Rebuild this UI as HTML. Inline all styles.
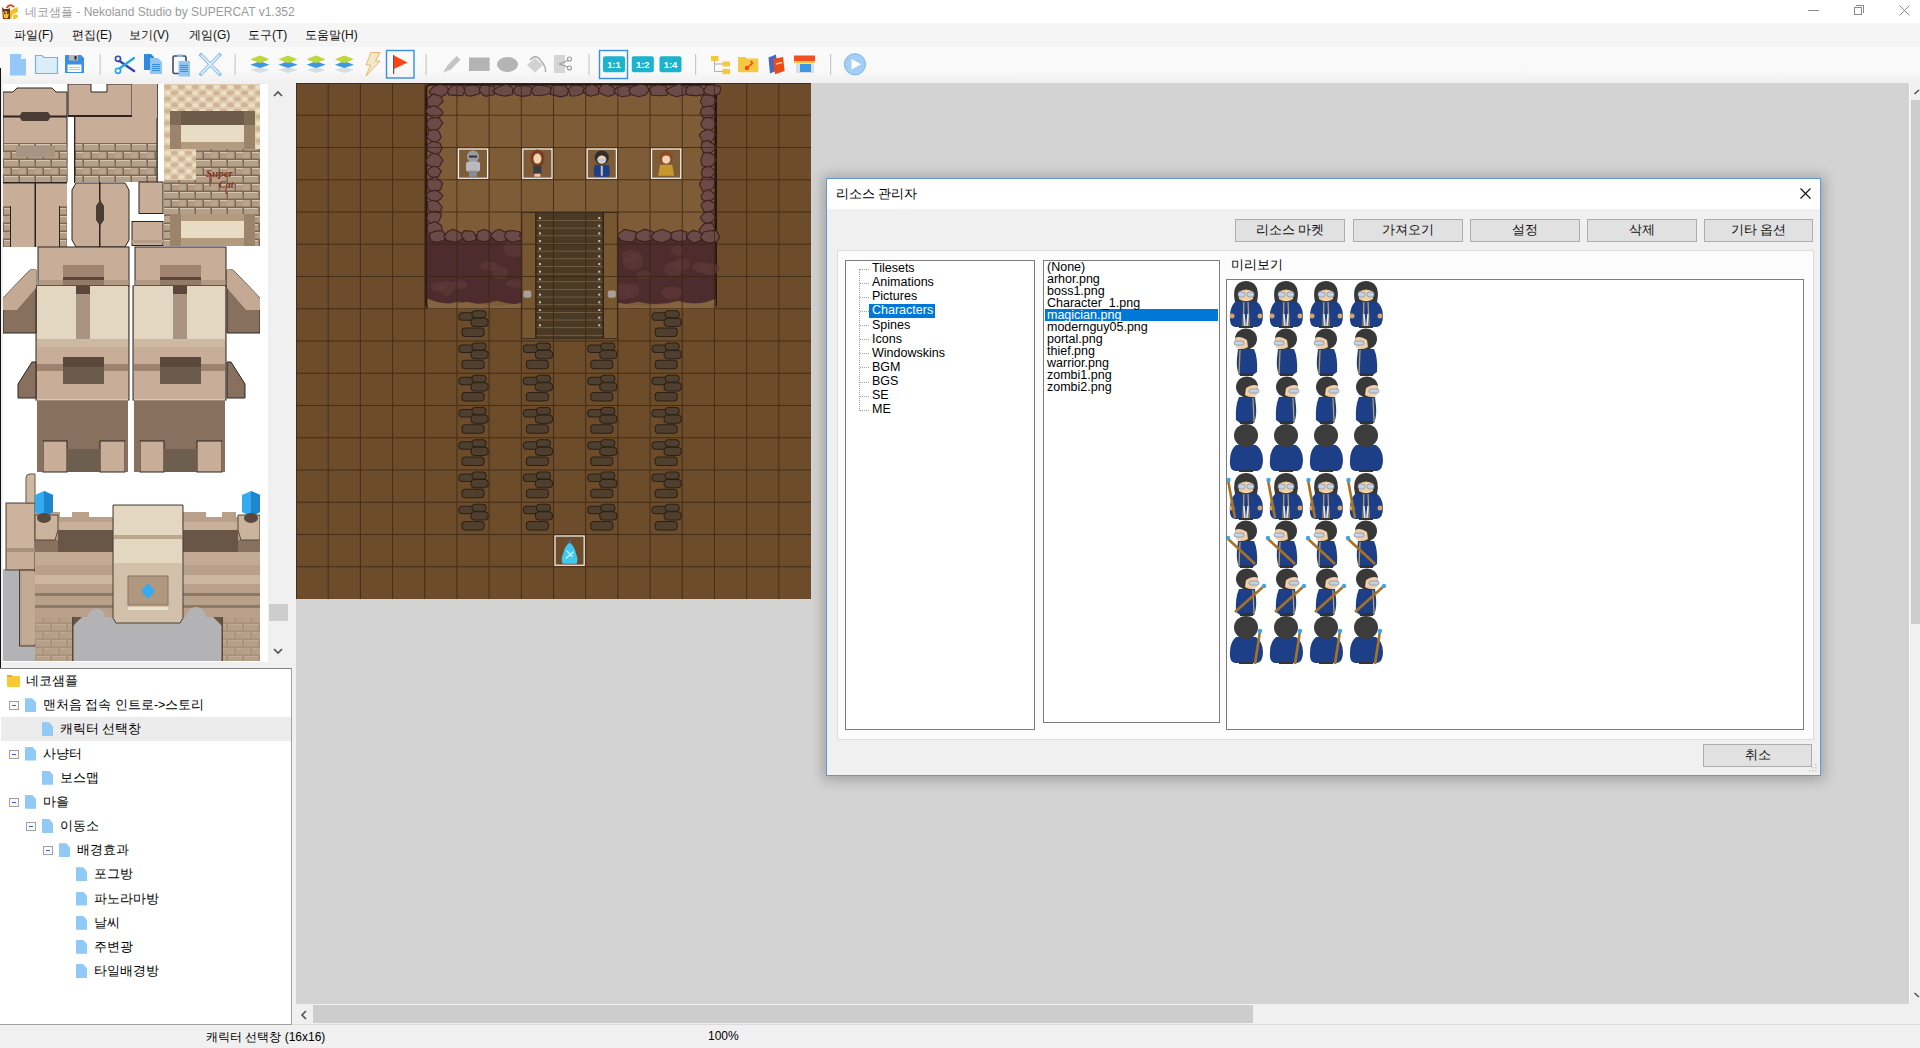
<!DOCTYPE html>
<html><head><meta charset="utf-8">
<style>
*{margin:0;padding:0;box-sizing:border-box}
html,body{width:1920px;height:1048px;overflow:hidden;background:#f0f0f0;font-family:"Liberation Sans",sans-serif;font-size:12px;color:#000}
.a{position:absolute}
#title{left:0;top:0;width:1920px;height:23px;background:#fff}
#menu{left:0;top:23px;width:1920px;height:24px;background:#f5f5f5}
#menu span{position:absolute;top:4px;font-size:12px;color:#111}
#tb{left:0;top:47px;width:1920px;height:36px;background:linear-gradient(#fafafa,#f9f9f9 65%,#f0f0f0)}
.sep{position:absolute;top:8px;width:1px;height:21px;background:#c8c8c8}
#work{left:296px;top:83px;width:1613px;height:921px;background:#d3d3d3}
#tree{left:0;top:668px;width:292px;height:357px;background:#fff;border-top:1px solid #828282;border-right:1px solid #a0a0a0;border-bottom:1px solid #a0a0a0}
.ti{position:absolute;height:24px;font-size:12.5px;line-height:24px;white-space:nowrap}
.doc{position:absolute;width:11px;height:14px;background:#91c9f7;clip-path:polygon(0 0,65% 0,100% 30%,100% 100%,0 100%)}
.mn{position:absolute;width:10px;height:9px;border:1px solid #a0a0a0;background:#fafafa}
.mn:after{content:"";position:absolute;left:2px;top:3px;width:4px;height:1px;background:#3c5fc4}
#status{left:0;top:1025px;width:1920px;height:23px;background:#f0f0f0}
#dlg{left:826px;top:178px;width:995px;height:598px;background:#f0f0f0;border:1px solid #5d9ad6;box-shadow:0 1px 12px 3px rgba(0,0,0,.24)}
.btn{position:absolute;height:23px;background:#e1e1e1;border:1px solid #adadad;font-size:12.5px;text-align:center;line-height:20px;color:#111}
.box{position:absolute;background:#fff;border:1px solid #7c7c7c}
.tr{position:absolute;left:26px;font-size:12.5px;line-height:14px;height:14px;white-space:nowrap;z-index:1}
.li{position:absolute;left:3px;font-size:12.5px;line-height:12px;height:12px;white-space:nowrap;z-index:1}
</style></head><body>

<!-- title bar -->
<div id="title" class="a">
  <svg class="a" style="left:0;top:0" width="20" height="22"><path d="M6.5 8 Q10 3 14 7" stroke="#f04010" stroke-width="1.8" fill="none"/><path d="M2 7 L4 9 L8 9 L10 8 V19 H3 Z" fill="#6a3418"/><path d="M3 12 L6 11 L9 13 L8 18 L4 18Z" fill="#f2c030"/><rect x="4" y="12.5" width="1.5" height="1.5" fill="#2a1408"/><rect x="7" y="12.5" width="1.5" height="1.5" fill="#2a1408"/><path d="M10 11 L13 9 L17.5 7 L18 12 L13 14 L11 19 H10Z" fill="#f0c030"/><path d="M13 15 Q18 13 18 17 Q17 19.5 13 19Z" fill="#f2c838"/><rect x="5" y="18" width="2" height="1.2" fill="#f04010"/></svg>
  <div class="a" style="left:25px;top:4px;font-size:12px;color:#9a9a9a;white-space:nowrap">네코샘플 - Nekoland Studio by SUPERCAT v1.352</div>
  <div class="a" style="left:1808px;top:10px;width:11px;height:1px;background:#8a8a8a"></div>
  <div class="a" style="left:1854px;top:7px;width:8px;height:8px;border:1px solid #8a8a8a"></div>
  <div class="a" style="left:1856px;top:5px;width:8px;height:8px;border-top:1px solid #8a8a8a;border-right:1px solid #8a8a8a"></div>
  <svg class="a" style="left:1899px;top:5px" width="11" height="11"><path d="M0.5 0.5L10.5 10.5M10.5 0.5L0.5 10.5" stroke="#8a8a8a" stroke-width="1"/></svg>
</div>

<!-- menu -->
<div id="menu" class="a">
  <span style="left:14px">파일(F)</span>
  <span style="left:72px">편집(E)</span>
  <span style="left:129px">보기(V)</span>
  <span style="left:189px">게임(G)</span>
  <span style="left:248px">도구(T)</span>
  <span style="left:305px">도움말(H)</span>
</div>

<!-- toolbar -->
<div id="tb" class="a"></div>
<!--TB--><svg class="a" style="left:0;top:47px" width="900" height="37"><rect x="99.5" y="7" width="1.2" height="21" fill="#c9c9c9"/><rect x="234.5" y="7" width="1.2" height="21" fill="#c9c9c9"/><rect x="425.5" y="7" width="1.2" height="21" fill="#c9c9c9"/><rect x="588.5" y="7" width="1.2" height="21" fill="#c9c9c9"/><rect x="695.0" y="7" width="1.2" height="21" fill="#c9c9c9"/><rect x="830.0" y="7" width="1.2" height="21" fill="#c9c9c9"/><path d="M10 7 H21 L26 12 V28.5 H10Z" fill="#94c8f6"/><path d="M21 7 L26 12 H21Z" fill="#eef6fd"/><path d="M35.5 8.5 H42 L44 10.5 H57.5 V26.5 H35.5Z" fill="#dcedfa" stroke="#70b4ec" stroke-width="1.2"/><path d="M65 8 H81 L84 11 V26 H65Z" fill="#3d8fe0"/><rect x="67.5" y="17.5" width="14" height="7.5" fill="#fafafa"/><rect x="69" y="20" width="11" height="1" fill="#c8c8c8"/><rect x="69" y="22" width="11" height="1" fill="#c8c8c8"/><rect x="69" y="8" width="9" height="5.5" fill="#b8b8b8"/><rect x="74.5" y="9" width="2" height="3.5" fill="#222"/><path d="M119.5 14 L134 24" stroke="#3a4aa8" stroke-width="2.6" stroke-linecap="round"/><path d="M119.5 21.5 L134 11" stroke="#20a8e8" stroke-width="2.2" stroke-linecap="round"/><circle cx="118" cy="11.799999999999997" r="2.6" fill="none" stroke="#3a4aa8" stroke-width="1.6"/><circle cx="118" cy="23.799999999999997" r="2.6" fill="none" stroke="#20a8e8" stroke-width="1.6"/><path d="M144 7 H151 L154 10 V23 H144Z" fill="#2e8ae0"/><path d="M150 11 H158 L162 15 V27 H150Z" fill="#92c6f5"/><rect x="152" y="17" width="8" height="1" fill="#3a8ee0"/><rect x="152" y="19" width="8" height="1" fill="#3a8ee0"/><rect x="152" y="21" width="8" height="1" fill="#3a8ee0"/><rect x="152" y="23" width="8" height="1" fill="#3a8ee0"/><rect x="173" y="9" width="13" height="17.5" rx="1.5" fill="#fafafa" stroke="#454a55" stroke-width="1.6"/><rect x="177" y="7.5" width="6" height="2.5" fill="#8ab4d8"/><rect x="178.5" y="14" width="11.5" height="15.5" fill="#92c6f5"/><rect x="180" y="18" width="8" height="1" fill="#3a8ee0"/><rect x="180" y="20" width="8" height="1" fill="#3a8ee0"/><rect x="180" y="22" width="8" height="1" fill="#3a8ee0"/><rect x="180" y="24" width="8" height="1" fill="#3a8ee0"/><path d="M201 8 L219.5 27 M219.5 8 L201 27" stroke="#8cc0ea" stroke-width="3.6" stroke-linecap="square"/><path d="M201 8 L219.5 27 M219.5 8 L201 27" stroke="#e4f2fc" stroke-width="1.6"/><path d="M250.3 23 L259.90000000000003 20 L269.5 23 L259.90000000000003 26Z" fill="#d5dde5"/><path d="M250.3 17.700000000000003 L259.90000000000003 14.299999999999997 L269.5 17.700000000000003 L259.90000000000003 21Z" fill="#3a98e4"/><path d="M250.3 12.299999999999997 L259.90000000000003 8.5 L269.5 12.299999999999997 L259.90000000000003 16.299999999999997Z" fill="#bcd83a"/><path d="M278.4 23 L288.0 20 L297.59999999999997 23 L288.0 26Z" fill="#d5dde5"/><path d="M278.4 17.700000000000003 L288.0 14.299999999999997 L297.59999999999997 17.700000000000003 L288.0 21Z" fill="#3a98e4"/><path d="M278.4 12.299999999999997 L288.0 8.5 L297.59999999999997 12.299999999999997 L288.0 16.299999999999997Z" fill="#bcd83a"/><path d="M306.5 23 L316.1 20 L325.7 23 L316.1 26Z" fill="#d5dde5"/><path d="M306.5 17.700000000000003 L316.1 14.299999999999997 L325.7 17.700000000000003 L316.1 21Z" fill="#3a98e4"/><path d="M306.5 12.299999999999997 L316.1 8.5 L325.7 12.299999999999997 L316.1 16.299999999999997Z" fill="#bcd83a"/><path d="M334.8 23 L344.40000000000003 20 L354.0 23 L344.40000000000003 26Z" fill="#d5dde5"/><path d="M334.8 17.700000000000003 L344.40000000000003 14.299999999999997 L354.0 17.700000000000003 L344.40000000000003 21Z" fill="#3a98e4"/><path d="M334.8 12.299999999999997 L344.40000000000003 8.5 L354.0 12.299999999999997 L344.40000000000003 16.299999999999997Z" fill="#bcd83a"/><path d="M371 5.5 H380 L375.5 14 H380 L366 29 L370.5 18 H366Z" fill="#f3e6c9" stroke="#e8b060" stroke-width="0.9"/><rect x="386.5" y="3.5" width="27.5" height="27.5" fill="none" stroke="#3a8ee6" stroke-width="1.4"/><rect x="393" y="8" width="1.2" height="19" fill="#505868"/><path d="M394 8.5 L407.5 15.5 L394 22Z" fill="#ff4412"/><path d="M443 25.5 L447 19 L456.5 9 L460.5 12.5 L451 22.5Z" fill="#c4c4c4"/><rect x="469" y="10.5" width="20.6" height="13.5" fill="#b4b4b4"/><ellipse cx="507.5" cy="17.5" rx="10.5" ry="7.5" fill="#b4b4b4"/><path d="M527 18 L535 11 L543 18 L535 25.5Z" fill="#d2d2d2"/><path d="M530 13 Q536 6 541 14 Q546 19 545.5 25" fill="none" stroke="#a8a8a8" stroke-width="1.3"/><rect x="554" y="8" width="11" height="18" fill="#d6d6d6"/><circle cx="569.5" cy="12" r="2" fill="none" stroke="#999" stroke-width="1.1"/><circle cx="569.5" cy="21" r="2" fill="none" stroke="#999" stroke-width="1.1"/><path d="M559 17 L568 13.5 M559 17 L568 20" stroke="#999" stroke-width="1.1"/><rect x="599.5" y="3.5" width="28" height="28" fill="none" stroke="#3a8ee6" stroke-width="1.4"/><rect x="603" y="9.200000000000003" width="22" height="16" rx="2" fill="#1cb3cc"/><text x="614" y="21" text-anchor="middle" font-family="Liberation Sans" font-weight="bold" font-size="9.5" fill="#fff">1:1</text><rect x="631.8" y="9.200000000000003" width="22" height="16" rx="2" fill="#1cb3cc"/><text x="642.8" y="21" text-anchor="middle" font-family="Liberation Sans" font-weight="bold" font-size="9.5" fill="#fff">1:2</text><rect x="659.5" y="9.200000000000003" width="22" height="16" rx="2" fill="#1cb3cc"/><text x="670.5" y="21" text-anchor="middle" font-family="Liberation Sans" font-weight="bold" font-size="9.5" fill="#fff">1:4</text><path d="M714.5 13 V24.5 H723 M714.5 17 H723" stroke="#a8b0b8" stroke-width="1" fill="none"/><rect x="711" y="9" width="7.5" height="5" fill="#f5c842"/><rect x="722.5" y="14.5" width="7.5" height="5" fill="#f5c842"/><rect x="722.5" y="21.799999999999997" width="7.5" height="5.4" fill="#f5c842"/><path d="M738 10 H745 L747 11.5 H758.3 V25.200000000000003 H738Z" fill="#f5c842"/><path d="M750.5 14 L752.5 16 L749 19.5" stroke="#f04a10" stroke-width="1.6" fill="none"/><circle cx="747" cy="21" r="2.2" fill="#f04a10"/><path d="M768.5 10.5 L776 7.5 L778 23 L770 26.5Z" fill="#4868c0"/><path d="M773 12 L783 10 L784.6 24 L775 27.200000000000003Z" fill="#f04a14"/><path d="M776 17 L782 15.5" stroke="#f8d0a0" stroke-width="1.4"/><rect x="796" y="15" width="18" height="11" fill="#d8dee4"/><rect x="800" y="17" width="11" height="8" fill="#3a98e4"/><rect x="794" y="8.5" width="21" height="6.5" fill="#f25020"/><rect x="794" y="14" width="21" height="2" fill="#f5c842"/><circle cx="855" cy="17.299999999999997" r="10.6" fill="#a3cff6" stroke="#7fb5e6" stroke-width="1"/><path d="M851.5 12 L861 17.299999999999997 L851.5 22.5Z" fill="#fff"/></svg><!--/TB-->

<!-- left black line -->
<div class="a" style="left:0;top:68px;width:1px;height:655px;background:#111"></div>

<!-- tileset panel -->
<div class="a" id="tsp" style="left:1px;top:83px;width:294px;height:585px;background:#f0f0f0">
  <div class="a" style="left:2px;top:1px;width:265px;height:578px;background:#fff"></div>
</div>
<div class="a" style="left:269px;top:604px;width:19px;height:17px;background:#cdcdcd"></div>
<svg class="a" style="left:273px;top:90px" width="10" height="7"><path d="M1 6 L5 2 L9 6" stroke="#505050" stroke-width="1.6" fill="none"/></svg>
<svg class="a" style="left:273px;top:648px" width="10" height="7"><path d="M1 1 L5 5 L9 1" stroke="#505050" stroke-width="1.6" fill="none"/></svg>
<!--TS--><svg class="a" style="left:3px;top:84px" width="257" height="577" viewBox="3 84 257 577"><defs>
<pattern id="brk" width="16" height="16" patternUnits="userSpaceOnUse" x="3" y="143">
<rect width="16" height="16" fill="#7f6856"/>
<rect x="1" y="1" width="14.5" height="6.5" fill="#b5a08a"/>
<rect x="-7" y="9" width="14.5" height="6.5" fill="#b8a38d"/><rect x="9" y="9" width="14.5" height="6.5" fill="#b29c86"/>
<rect x="1" y="1" width="14" height="1" fill="#d6c6b2"/><rect x="9" y="9" width="14" height="1" fill="#d6c6b2"/>
</pattern>
<pattern id="hex" width="14" height="12" patternUnits="userSpaceOnUse" x="164" y="84">
<rect width="14" height="12" fill="#e0cdb0"/>
<ellipse cx="3.5" cy="3" rx="3.5" ry="2.2" fill="#d0b496"/><ellipse cx="10.5" cy="9" rx="3.5" ry="2.2" fill="#d0b496"/>
<ellipse cx="10.5" cy="3" rx="3" ry="2" fill="#ece0c6"/><ellipse cx="3.5" cy="9" rx="3" ry="2" fill="#ece0c6"/>
</pattern>
</defs><rect x="3" y="84" width="257" height="577" fill="#ffffff"/><path d="M3 92 H13 L17 88 H52 L56 92 H67 V182 H3Z" fill="#c8ae98" stroke="#2c2420" stroke-width="1"/><rect x="3" y="115.5" width="64" height="2" fill="#2c2420"/><path d="M19 116.5 L22 112 H48 L51 116.5 L48 121 H22Z" fill="#4a3c34"/><rect x="3" y="143" width="64" height="39" fill="url(#brk)"/><rect x="16" y="146" width="39" height="11" fill="#a89482"/><path d="M68 84 H91 V92 H107 V84 H132 V116 H68Z" fill="#c8ae98" stroke="#2c2420" stroke-width="1"/><rect x="68" y="115" width="64" height="2" fill="#2c2420"/><rect x="75" y="117" width="82" height="65" fill="#c8ae98"/><rect x="75" y="143" width="82" height="39" fill="url(#brk)"/><rect x="74" y="117" width="1.3" height="66" fill="#2c2420"/><rect x="156.5" y="84" width="1.3" height="99" fill="#2c2420"/><rect x="132" y="84" width="25" height="34" fill="#c8ae98"/><rect x="3" y="182" width="64" height="65" fill="#c8ae98"/><rect x="3" y="182" width="64" height="1.5" fill="#2c2420"/><rect x="34.5" y="183" width="1.5" height="64" fill="#2c2420"/><rect x="3" y="206" width="7" height="41" fill="url(#brk)"/><rect x="59" y="206" width="8" height="41" fill="url(#brk)"/><rect x="10" y="206" width="1" height="41" fill="#2c2420"/><rect x="59" y="206" width="1" height="41" fill="#2c2420"/><path d="M72 190 L76 183 H125 L129 190 V240 L125 247 H76 L72 240Z" fill="#c8ae98" stroke="#2c2420" stroke-width="1"/><rect x="99" y="182" width="1.5" height="65" fill="#2c2420"/><path d="M100 200 L104 206 V220 L100 226 L96 220 V206Z" fill="#4a3c34"/><rect x="139" y="182" width="24" height="31.5" fill="#c8ae98" stroke="#2c2420" stroke-width="1"/><rect x="132" y="221.5" width="31" height="24" fill="#c8ae98" stroke="#2c2420" stroke-width="1"/><rect x="132" y="240" width="31" height="3" fill="#b49c86"/><rect x="164" y="84" width="96" height="65" fill="url(#hex)"/><rect x="170" y="111" width="85" height="38" fill="#b39b80"/><rect x="170" y="111" width="85" height="14" fill="#6e5a48"/><rect x="181" y="125" width="63" height="17" fill="#e8dcc4"/><rect x="170" y="111" width="11" height="38" fill="#8a745e" opacity=".6"/><rect x="244" y="111" width="11" height="38" fill="#8a745e" opacity=".6"/><rect x="164" y="149" width="96" height="66" fill="url(#brk)"/><rect x="164" y="149" width="32" height="31" fill="url(#hex)"/><text x="206" y="177" font-family="Liberation Serif" font-weight="bold" font-style="italic" font-size="11" fill="#7a3216">Super</text><text x="219" y="188" font-family="Liberation Serif" font-weight="bold" font-style="italic" font-size="10" fill="#7a3216">Cat</text><path d="M210 177 V186 M226 188 V194" stroke="#7a3216" stroke-width="1"/><rect x="164" y="214" width="96" height="32" fill="url(#brk)"/><rect x="170" y="214" width="85" height="32" fill="#b39b80"/><rect x="181" y="221" width="63" height="17" fill="#e8dcc4"/><rect x="170" y="214" width="11" height="32" fill="#8a745e" opacity=".6"/><rect x="244" y="214" width="11" height="32" fill="#8a745e" opacity=".6"/><rect x="38" y="247" width="91" height="39" fill="#c8ae98" stroke="#2c2420" stroke-width="1"/><rect x="63" y="265" width="41" height="13" fill="#a08470"/><rect x="63" y="277" width="41" height="13" fill="#5a463a"/><rect x="38" y="280" width="91" height="6" fill="#a8907a" opacity=".7"/><rect x="36" y="286" width="93" height="114" fill="#c8ae98" stroke="#2c2420" stroke-width="1"/><rect x="37" y="286" width="91" height="54" fill="#e3d7c2"/><rect x="76" y="290" width="14" height="55" fill="#a89480"/><rect x="76" y="286" width="14" height="8" fill="#5a463a"/><rect x="37" y="339" width="91" height="8" fill="#cdb8a2"/><rect x="63" y="357" width="41" height="10" fill="#5a483c"/><rect x="63" y="367" width="41" height="17" fill="#6a5a4c"/><rect x="37" y="364" width="26" height="7" fill="#a08270"/><rect x="104" y="364" width="24" height="7" fill="#a08270"/><rect x="37" y="400" width="91" height="49" fill="#87705e"/><rect x="37" y="399" width="91" height="1.3" fill="#d8c8b4"/><rect x="43" y="441" width="24" height="31" fill="#c8ae98" stroke="#2c2420" stroke-width="1"/><rect x="100" y="441" width="25" height="31" fill="#c8ae98" stroke="#2c2420" stroke-width="1"/><rect x="67" y="449" width="33" height="23" fill="#6e5e50"/><rect x="37" y="441" width="6" height="31" fill="#87705e"/><rect x="125" y="441" width="3" height="31" fill="#87705e"/><rect x="135" y="247" width="91" height="39" fill="#c8ae98" stroke="#2c2420" stroke-width="1"/><rect x="160" y="265" width="41" height="13" fill="#a08470"/><rect x="160" y="277" width="41" height="13" fill="#5a463a"/><rect x="135" y="280" width="91" height="6" fill="#a8907a" opacity=".7"/><rect x="133" y="286" width="93" height="114" fill="#c8ae98" stroke="#2c2420" stroke-width="1"/><rect x="134" y="286" width="91" height="54" fill="#e3d7c2"/><rect x="173" y="290" width="14" height="55" fill="#a89480"/><rect x="173" y="286" width="14" height="8" fill="#5a463a"/><rect x="134" y="339" width="91" height="8" fill="#cdb8a2"/><rect x="160" y="357" width="41" height="10" fill="#5a483c"/><rect x="160" y="367" width="41" height="17" fill="#6a5a4c"/><rect x="134" y="364" width="26" height="7" fill="#a08270"/><rect x="201" y="364" width="24" height="7" fill="#a08270"/><rect x="134" y="400" width="91" height="49" fill="#87705e"/><rect x="134" y="399" width="91" height="1.3" fill="#d8c8b4"/><rect x="140" y="441" width="24" height="31" fill="#c8ae98" stroke="#2c2420" stroke-width="1"/><rect x="197" y="441" width="25" height="31" fill="#c8ae98" stroke="#2c2420" stroke-width="1"/><rect x="164" y="449" width="33" height="23" fill="#6e5e50"/><rect x="134" y="441" width="6" height="31" fill="#87705e"/><rect x="222" y="441" width="3" height="31" fill="#87705e"/><path d="M3 298 L30 270 H36 V333 H3Z" fill="#87705e" stroke="#2c2420" stroke-width="1"/><path d="M3 298 L30 270 H36 V288 L17 310 H3Z" fill="#c4aa94"/><path d="M260 298 L233 270 H227 V333 H260Z" fill="#87705e" stroke="#2c2420" stroke-width="1"/><path d="M260 298 L233 270 H227 V288 L246 310 H260Z" fill="#c4aa94"/><path d="M18 384 L32 362 H36 V398 H18Z" fill="#87705e" stroke="#2c2420" stroke-width="1"/><path d="M245 384 L231 362 H227 V398 H245Z" fill="#87705e" stroke="#2c2420" stroke-width="1"/><rect x="3" y="569" width="32" height="92" fill="#b3b3b5"/><rect x="6" y="503" width="29" height="67" fill="#c8ae98" stroke="#4a3c34" stroke-width="1"/><rect x="7" y="504" width="27" height="46" fill="#cbb39d"/><rect x="7" y="548" width="28" height="4" fill="#a8907a"/><rect x="19.5" y="570" width="15.5" height="76" fill="#b8a08a" stroke="#4a3c34" stroke-width="1"/><rect x="22" y="572" width="13" height="72" fill="#c2aa94"/><path d="M26 478 Q26 474 30 474 H35 V503 H26Z" fill="#cdb9a4" stroke="#6a5646" stroke-width="1"/><path d="M35 512 H60 V517 H72 V512 H89 V517 H113 V661 H35Z" fill="#b8a08a"/><rect x="35" y="522" width="78" height="9" fill="#c8b09a"/><rect x="58" y="530" width="55" height="22" fill="#6a5646"/><rect x="35" y="540" width="23" height="12" fill="#86705e"/><rect x="35" y="552" width="78" height="13" fill="#c2aa94"/><rect x="35" y="575" width="78" height="9" fill="#cdb6a0"/><rect x="35" y="593" width="78" height="3" fill="#8e7866"/><rect x="35" y="605" width="78" height="3" fill="#8e7866"/><rect x="35" y="618" width="38" height="43" fill="url(#brk)" opacity=".3"/><path d="M183 512 H206 V517 H222 V512 H236 V517 H260 V661 H183Z" fill="#b8a08a"/><rect x="183" y="522" width="77" height="9" fill="#c8b09a"/><rect x="183" y="530" width="55" height="22" fill="#6a5646"/><rect x="238" y="540" width="22" height="12" fill="#86705e"/><rect x="183" y="552" width="77" height="13" fill="#c2aa94"/><rect x="183" y="575" width="77" height="9" fill="#cdb6a0"/><rect x="183" y="593" width="77" height="3" fill="#8e7866"/><rect x="183" y="605" width="77" height="3" fill="#8e7866"/><rect x="222" y="618" width="38" height="43" fill="url(#brk)" opacity=".3"/><path d="M73 661 V617 H88 A8.5 8.5 0 0 1 105 617 H186 A10 10 0 0 1 206 617 H222 V661Z" fill="#b3b3b5"/><path d="M73 617 H82 L73 626Z" fill="#6a5646"/><path d="M222 617 H213 L222 626Z" fill="#6a5646"/><rect x="72" y="617" width="1.5" height="44" fill="#5a483c"/><rect x="221.5" y="617" width="1.5" height="44" fill="#5a483c"/><path d="M113 505 H183 V618 L180 623 H116 L113 618Z" fill="#d2c0aa" stroke="#4a3c34" stroke-width="1"/><rect x="114" y="506" width="68" height="57" fill="#e3d7c2"/><rect x="114" y="535" width="68" height="4" fill="#bca68e"/><rect x="128" y="576" width="40" height="29" fill="#b09880" stroke="#8a745e" stroke-width="1"/><path d="M148 583 L155 591 L148 599 L141 591Z" fill="#36aaf0"/><rect x="128" y="607" width="40" height="3" fill="#ece2d0"/><path d="M35 515 H58 V530 L55 540 H35Z" fill="#cbb49e" stroke="#5a483c" stroke-width="1"/><path d="M260 515 H238 V530 L241 540 H260Z" fill="#cbb49e" stroke="#5a483c" stroke-width="1"/><path d="M35 495 L44 491 L53 495 V512 L44 517 L35 512Z" fill="#36aaf0"/><path d="M44 491 L53 495 V512 L44 517Z" fill="#1e86d0"/><ellipse cx="44" cy="518" rx="7" ry="5" fill="#5a483c"/><path d="M242 495 L251 491 L260 495 V512 L251 517 L242 512Z" fill="#36aaf0"/><path d="M251 491 L260 495 V512 L251 517Z" fill="#1e86d0"/><ellipse cx="251" cy="518" rx="7" ry="5" fill="#5a483c"/></svg><!--/TS-->

<!-- work area -->
<div id="work" class="a"></div>
<!--MAP--><svg class="a" style="left:296px;top:83px" width="515" height="516" viewBox="0 0 512 512" preserveAspectRatio="none"><rect width="512" height="512" fill="#6c4c2a"/><rect x="129.5" y="1.5" width="288" height="222" rx="4" fill="#7d5c37" stroke="#24140f" stroke-width="2"/><path d="M130 150 H417 V214 Q400 222 380 216 Q360 222 340 217 Q320 222 300 217 L240 217 Q220 222 200 216 Q180 222 160 217 Q145 222 130 214Z" fill="#4e2b2d"/><ellipse cx="203.2" cy="188.1" rx="7.8" ry="6.4" fill="#5e3838" opacity=".75"/><ellipse cx="141.6" cy="202.2" rx="7.3" ry="4.9" fill="#5e3838" opacity=".75"/><ellipse cx="410.8" cy="184.6" rx="10.2" ry="5.9" fill="#5e3838" opacity=".75"/><ellipse cx="345.8" cy="190.4" rx="7.5" ry="4.1" fill="#5e3838" opacity=".75"/><ellipse cx="375.2" cy="184.7" rx="9.6" ry="7.5" fill="#5e3838" opacity=".75"/><ellipse cx="333.7" cy="206.2" rx="8.0" ry="7.2" fill="#5e3838" opacity=".75"/><ellipse cx="378.8" cy="166.7" rx="6.7" ry="4.9" fill="#5e3838" opacity=".75"/><ellipse cx="402.5" cy="182.9" rx="9.1" ry="5.2" fill="#5e3838" opacity=".75"/><ellipse cx="324.9" cy="206.6" rx="10.3" ry="8.0" fill="#5e3838" opacity=".75"/><ellipse cx="373.8" cy="208.3" rx="10.5" ry="6.3" fill="#5e3838" opacity=".75"/><ellipse cx="333.6" cy="172.1" rx="10.2" ry="6.3" fill="#5e3838" opacity=".75"/><ellipse cx="216.1" cy="165.0" rx="10.3" ry="8.0" fill="#5e3838" opacity=".75"/><ellipse cx="162.3" cy="200.4" rx="8.1" ry="4.6" fill="#5e3838" opacity=".75"/><ellipse cx="218.5" cy="198.9" rx="10.4" ry="4.2" fill="#5e3838" opacity=".75"/><ellipse cx="334.9" cy="177.9" rx="10.4" ry="7.9" fill="#5e3838" opacity=".75"/><ellipse cx="192.1" cy="181.6" rx="9.1" ry="4.6" fill="#5e3838" opacity=".75"/><ellipse cx="149.6" cy="203.7" rx="7.6" ry="7.8" fill="#5e3838" opacity=".75"/><ellipse cx="383.7" cy="180.1" rx="8.3" ry="6.1" fill="#5e3838" opacity=".75"/><polygon points="152.6,7.5 148.5,11.6 143.3,14.1 134.7,11.6 132.3,8.6 136.2,3.9 142.8,1.4 148.6,2.5" fill="#6b4a47" stroke="#3b2220" stroke-width="1.1"/><polygon points="168.0,7.9 165.7,12.3 161.0,12.5 151.9,11.8 150.8,8.1 153.8,3.5 159.1,2.0 165.7,3.0" fill="#6b4a47" stroke="#3b2220" stroke-width="1.1"/><polygon points="183.9,7.2 181.9,10.8 174.1,13.0 169.2,12.5 167.3,8.1 168.4,3.3 173.6,2.1 180.9,2.7" fill="#6b4a47" stroke="#3b2220" stroke-width="1.1"/><polygon points="197.9,8.2 197.0,11.5 188.7,13.2 185.2,11.5 182.1,7.4 184.1,2.4 189.0,2.1 197.3,3.8" fill="#6b4a47" stroke="#3b2220" stroke-width="1.1"/><polygon points="215.7,7.2 215.1,11.6 207.7,13.0 200.1,11.7 195.5,7.7 200.0,4.5 208.8,1.1 215.0,4.3" fill="#6b4a47" stroke="#3b2220" stroke-width="1.1"/><polygon points="234.6,8.4 232.4,12.5 224.4,13.3 218.6,11.7 215.9,8.1 218.3,3.5 226.2,2.5 234.1,3.9" fill="#6b4a47" stroke="#3b2220" stroke-width="1.1"/><polygon points="255.2,8.5 249.8,11.1 242.8,12.7 236.6,12.2 233.5,7.4 237.5,2.6 243.1,2.1 252.0,4.0" fill="#6b4a47" stroke="#3b2220" stroke-width="1.1"/><polygon points="270.9,7.2 269.4,12.1 263.2,13.8 252.9,11.2 253.4,6.9 254.4,2.7 260.1,2.2 268.2,3.0" fill="#6b4a47" stroke="#3b2220" stroke-width="1.1"/><polygon points="287.9,7.4 284.8,10.3 279.6,12.6 272.7,12.9 270.8,6.8 272.6,3.6 277.8,1.9 285.1,3.5" fill="#6b4a47" stroke="#3b2220" stroke-width="1.1"/><polygon points="301.8,6.8 300.8,11.0 293.1,13.1 289.3,11.8 285.0,7.8 288.6,3.1 294.8,1.5 299.4,3.4" fill="#6b4a47" stroke="#3b2220" stroke-width="1.1"/><polygon points="318.1,8.0 315.1,11.9 310.3,13.4 303.4,10.8 300.5,7.7 303.3,2.2 308.8,1.0 315.9,4.1" fill="#6b4a47" stroke="#3b2220" stroke-width="1.1"/><polygon points="334.8,6.5 331.8,12.4 324.1,13.6 318.2,11.3 316.2,8.4 318.6,4.6 326.1,2.5 329.8,3.3" fill="#6b4a47" stroke="#3b2220" stroke-width="1.1"/><polygon points="351.0,6.9 347.8,11.6 340.8,13.6 332.9,11.5 331.0,7.3 333.1,3.9 342.3,1.3 348.8,2.4" fill="#6b4a47" stroke="#3b2220" stroke-width="1.1"/><polygon points="370.5,6.5 368.6,12.1 361.7,12.7 353.8,12.2 350.6,6.9 353.1,3.7 360.1,1.8 366.8,2.8" fill="#6b4a47" stroke="#3b2220" stroke-width="1.1"/><polygon points="390.8,7.3 388.4,11.2 378.3,13.6 371.9,11.6 367.6,7.1 372.0,4.4 380.6,1.0 386.9,3.5" fill="#6b4a47" stroke="#3b2220" stroke-width="1.1"/><polygon points="406.5,6.8 405.4,11.2 398.2,12.8 389.1,11.8 387.2,8.0 389.6,3.1 397.8,2.1 402.7,3.6" fill="#6b4a47" stroke="#3b2220" stroke-width="1.1"/><polygon points="422.2,7.3 420.4,11.2 413.2,12.7 406.7,10.7 405.2,7.3 408.1,2.4 414.3,1.7 421.7,3.4" fill="#6b4a47" stroke="#3b2220" stroke-width="1.1"/><polygon points="146.2,18.5 142.6,22.0 138.4,24.7 130.9,22.7 130.5,16.9 131.9,14.1 136.5,10.9 144.4,13.4" fill="#6b4a47" stroke="#3b2220" stroke-width="1.1"/><polygon points="418.0,17.1 415.2,22.0 408.9,23.5 404.6,23.6 402.1,18.3 404.0,12.8 408.1,11.7 414.8,13.1" fill="#6b4a47" stroke="#3b2220" stroke-width="1.1"/><polygon points="146.2,29.3 143.3,33.2 138.6,34.7 132.4,32.6 129.0,28.0 130.4,25.0 137.1,22.4 143.1,25.4" fill="#6b4a47" stroke="#3b2220" stroke-width="1.1"/><polygon points="417.5,29.5 413.9,33.5 408.6,35.9 403.6,33.1 401.9,30.0 403.4,24.7 410.1,22.8 414.4,24.0" fill="#6b4a47" stroke="#3b2220" stroke-width="1.1"/><polygon points="146.0,39.7 142.0,45.4 136.3,46.9 132.1,46.4 129.7,40.4 132.4,35.5 137.0,34.3 142.2,34.6" fill="#6b4a47" stroke="#3b2220" stroke-width="1.1"/><polygon points="417.3,41.4 414.2,45.9 410.2,47.5 404.1,44.3 402.4,40.7 404.9,35.4 409.0,33.9 415.5,35.4" fill="#6b4a47" stroke="#3b2220" stroke-width="1.1"/><polygon points="144.3,53.5 142.7,56.3 138.8,59.6 132.1,56.4 130.0,53.4 132.1,47.2 138.3,46.1 142.0,47.7" fill="#6b4a47" stroke="#3b2220" stroke-width="1.1"/><polygon points="417.2,51.9 414.3,56.9 410.3,59.6 404.8,58.5 400.9,51.5 403.7,48.3 409.8,46.0 416.2,48.9" fill="#6b4a47" stroke="#3b2220" stroke-width="1.1"/><polygon points="145.1,64.9 143.1,68.9 139.1,70.7 131.7,68.1 129.9,63.9 131.4,60.1 136.1,57.8 143.2,59.8" fill="#6b4a47" stroke="#3b2220" stroke-width="1.1"/><polygon points="418.3,64.2 413.5,68.5 408.6,70.5 405.3,69.0 402.8,64.6 403.4,58.9 408.9,57.0 414.7,60.3" fill="#6b4a47" stroke="#3b2220" stroke-width="1.1"/><polygon points="146.2,76.6 142.8,82.5 138.0,84.5 130.5,81.1 129.2,76.5 132.7,71.6 136.3,69.8 141.8,70.9" fill="#6b4a47" stroke="#3b2220" stroke-width="1.1"/><polygon points="417.7,76.3 414.7,81.6 409.1,83.4 403.7,82.1 402.5,76.6 404.7,69.7 409.1,69.0 415.2,70.8" fill="#6b4a47" stroke="#3b2220" stroke-width="1.1"/><polygon points="144.4,87.3 141.8,92.8 137.6,94.0 133.2,92.8 130.6,88.7 131.9,85.4 136.5,82.4 141.3,84.1" fill="#6b4a47" stroke="#3b2220" stroke-width="1.1"/><polygon points="417.0,88.3 413.8,92.5 409.8,94.4 404.6,94.2 402.8,89.1 404.5,84.6 409.9,82.6 413.5,84.2" fill="#6b4a47" stroke="#3b2220" stroke-width="1.1"/><polygon points="145.8,99.6 143.7,106.1 138.1,107.1 132.1,106.5 130.2,100.0 130.9,95.9 139.0,93.0 141.2,95.1" fill="#6b4a47" stroke="#3b2220" stroke-width="1.1"/><polygon points="416.4,99.3 415.0,103.9 409.0,108.5 404.1,106.9 401.1,100.4 404.4,93.6 408.2,93.6 415.9,94.8" fill="#6b4a47" stroke="#3b2220" stroke-width="1.1"/><polygon points="146.0,111.5 143.5,115.3 138.0,118.1 131.8,115.0 129.3,111.4 132.8,107.3 138.7,106.5 142.3,108.1" fill="#6b4a47" stroke="#3b2220" stroke-width="1.1"/><polygon points="417.1,112.6 414.8,115.4 408.8,118.0 403.8,115.6 402.6,112.0 405.2,108.2 409.4,105.7 414.6,108.6" fill="#6b4a47" stroke="#3b2220" stroke-width="1.1"/><polygon points="145.5,123.5 142.6,128.2 137.7,129.5 131.9,126.4 130.8,122.9 131.1,117.9 136.3,116.4 141.5,118.3" fill="#6b4a47" stroke="#3b2220" stroke-width="1.1"/><polygon points="416.6,123.0 415.2,125.8 409.0,129.0 405.6,127.4 402.6,121.6 404.3,118.3 410.4,116.3 415.6,118.8" fill="#6b4a47" stroke="#3b2220" stroke-width="1.1"/><polygon points="144.2,132.8 141.7,137.7 139.2,140.3 132.2,138.8 130.0,134.5 130.9,129.3 137.9,127.2 144.2,129.2" fill="#6b4a47" stroke="#3b2220" stroke-width="1.1"/><polygon points="417.4,133.1 414.4,137.2 408.4,139.7 403.9,136.9 401.9,133.4 405.2,129.4 409.0,127.5 414.0,128.5" fill="#6b4a47" stroke="#3b2220" stroke-width="1.1"/><polygon points="145.5,145.1 142.3,150.3 138.0,153.7 132.5,150.7 130.5,146.4 130.6,140.3 138.3,137.3 144.1,141.1" fill="#6b4a47" stroke="#3b2220" stroke-width="1.1"/><polygon points="417.2,146.6 415.9,151.0 408.1,153.5 403.6,151.0 400.7,145.6 405.3,139.8 410.7,138.8 414.3,139.0" fill="#6b4a47" stroke="#3b2220" stroke-width="1.1"/><polygon points="149.1,152.0 147.7,155.7 141.1,158.0 134.5,156.9 132.6,151.4 134.0,148.6 140.1,146.7 145.8,146.7" fill="#6b4a47" stroke="#3b2220" stroke-width="1.1"/><polygon points="167.3,153.3 161.9,156.7 157.6,157.7 149.6,156.4 147.1,151.9 150.9,147.4 156.2,145.2 163.6,148.5" fill="#6b4a47" stroke="#3b2220" stroke-width="1.1"/><polygon points="179.1,152.6 178.8,155.7 172.1,157.5 168.0,156.6 164.2,151.3 167.2,146.5 173.5,146.8 176.5,147.9" fill="#6b4a47" stroke="#3b2220" stroke-width="1.1"/><polygon points="194.8,151.7 192.6,155.9 187.8,157.6 180.5,155.7 179.7,152.5 180.6,147.6 187.9,145.2 193.6,148.5" fill="#6b4a47" stroke="#3b2220" stroke-width="1.1"/><polygon points="210.3,152.7 208.0,156.8 201.8,157.7 197.9,156.2 193.2,151.6 197.4,147.1 202.5,145.1 208.3,148.1" fill="#6b4a47" stroke="#3b2220" stroke-width="1.1"/><polygon points="224.5,152.0 223.9,155.9 214.8,158.1 210.9,156.3 207.1,152.1 209.4,147.2 215.4,146.3 222.6,147.8" fill="#6b4a47" stroke="#3b2220" stroke-width="1.1"/><polygon points="244.8,152.9 239.3,155.9 233.1,158.2 226.7,156.1 221.9,151.4 224.7,148.2 232.8,145.9 242.8,147.9" fill="#6b4a47" stroke="#3b2220" stroke-width="1.1"/><polygon points="261.5,151.2 258.1,155.6 249.7,157.7 244.0,157.3 242.0,151.0 244.3,148.1 249.6,146.4 257.8,149.0" fill="#6b4a47" stroke="#3b2220" stroke-width="1.1"/><polygon points="273.5,151.4 272.6,156.7 265.3,158.3 261.0,155.2 257.3,152.6 260.3,148.7 266.4,146.3 271.5,148.3" fill="#6b4a47" stroke="#3b2220" stroke-width="1.1"/><polygon points="288.0,153.0 285.2,156.5 279.2,158.3 275.4,155.6 272.3,153.2 275.0,148.6 282.0,145.3 286.1,146.3" fill="#6b4a47" stroke="#3b2220" stroke-width="1.1"/><polygon points="304.2,151.7 303.9,156.7 296.9,157.4 291.3,156.3 285.9,152.4 289.4,148.8 298.0,145.1 303.2,148.8" fill="#6b4a47" stroke="#3b2220" stroke-width="1.1"/><polygon points="320.2,153.1 317.1,156.4 313.4,157.7 304.7,156.2 303.4,151.8 306.0,147.7 312.0,145.3 317.3,147.1" fill="#6b4a47" stroke="#3b2220" stroke-width="1.1"/><polygon points="338.1,152.8 335.2,157.6 330.0,157.6 323.1,156.2 318.7,150.9 323.2,147.7 326.5,145.3 338.2,147.7" fill="#6b4a47" stroke="#3b2220" stroke-width="1.1"/><polygon points="357.0,152.1 354.5,155.6 346.8,157.5 339.8,155.9 337.3,152.0 339.6,148.2 347.0,145.0 355.3,148.1" fill="#6b4a47" stroke="#3b2220" stroke-width="1.1"/><polygon points="375.7,151.4 371.1,155.5 364.1,158.5 357.1,156.8 352.6,152.6 356.9,147.8 364.3,145.2 372.6,148.6" fill="#6b4a47" stroke="#3b2220" stroke-width="1.1"/><polygon points="388.6,152.3 388.0,156.6 380.1,157.3 374.1,155.5 372.6,150.9 373.9,148.1 382.3,146.1 388.5,148.1" fill="#6b4a47" stroke="#3b2220" stroke-width="1.1"/><polygon points="404.9,151.5 402.4,156.0 395.8,158.8 390.8,155.7 388.2,152.7 391.2,148.0 395.0,146.3 401.1,148.0" fill="#6b4a47" stroke="#3b2220" stroke-width="1.1"/><polygon points="421.2,153.0 418.5,157.2 410.7,158.8 405.4,156.7 402.0,153.0 405.3,147.9 413.4,146.3 418.2,146.7" fill="#6b4a47" stroke="#3b2220" stroke-width="1.1"/><path d="M131 214 Q150 222 170 217 Q200 224 224 218 V225 H131Z" fill="#85653f"/><path d="M320 218 Q350 224 380 217 Q400 223 417 214 V225 H320Z" fill="#85653f"/><rect x="224" y="128" width="96" height="126" fill="#3f2f1e"/><rect x="225" y="129" width="13" height="124" fill="#775730"/><rect x="306" y="129" width="13" height="124" fill="#775730"/><rect x="239" y="129" width="66" height="124" fill="#4a3925"/><rect x="239" y="136.0" width="66" height="0.8" fill="#7a6448"/><rect x="241.5" y="133.0" width="2" height="2" fill="#c8c0b0"/><rect x="300.5" y="133.0" width="2" height="2" fill="#c8c0b0"/><rect x="239" y="143.6" width="66" height="0.8" fill="#7a6448"/><rect x="241.5" y="140.6" width="2" height="2" fill="#c8c0b0"/><rect x="300.5" y="140.6" width="2" height="2" fill="#c8c0b0"/><rect x="239" y="151.2" width="66" height="0.8" fill="#7a6448"/><rect x="241.5" y="148.2" width="2" height="2" fill="#c8c0b0"/><rect x="300.5" y="148.2" width="2" height="2" fill="#c8c0b0"/><rect x="239" y="158.8" width="66" height="0.8" fill="#7a6448"/><rect x="241.5" y="155.8" width="2" height="2" fill="#c8c0b0"/><rect x="300.5" y="155.8" width="2" height="2" fill="#c8c0b0"/><rect x="239" y="166.4" width="66" height="0.8" fill="#7a6448"/><rect x="241.5" y="163.4" width="2" height="2" fill="#c8c0b0"/><rect x="300.5" y="163.4" width="2" height="2" fill="#c8c0b0"/><rect x="239" y="174.0" width="66" height="0.8" fill="#7a6448"/><rect x="241.5" y="171.0" width="2" height="2" fill="#c8c0b0"/><rect x="300.5" y="171.0" width="2" height="2" fill="#c8c0b0"/><rect x="239" y="181.6" width="66" height="0.8" fill="#7a6448"/><rect x="241.5" y="178.6" width="2" height="2" fill="#c8c0b0"/><rect x="300.5" y="178.6" width="2" height="2" fill="#c8c0b0"/><rect x="239" y="189.2" width="66" height="0.8" fill="#7a6448"/><rect x="241.5" y="186.2" width="2" height="2" fill="#c8c0b0"/><rect x="300.5" y="186.2" width="2" height="2" fill="#c8c0b0"/><rect x="239" y="196.8" width="66" height="0.8" fill="#7a6448"/><rect x="241.5" y="193.8" width="2" height="2" fill="#c8c0b0"/><rect x="300.5" y="193.8" width="2" height="2" fill="#c8c0b0"/><rect x="239" y="204.4" width="66" height="0.8" fill="#7a6448"/><rect x="241.5" y="201.4" width="2" height="2" fill="#c8c0b0"/><rect x="300.5" y="201.4" width="2" height="2" fill="#c8c0b0"/><rect x="239" y="212.0" width="66" height="0.8" fill="#7a6448"/><rect x="241.5" y="209.0" width="2" height="2" fill="#c8c0b0"/><rect x="300.5" y="209.0" width="2" height="2" fill="#c8c0b0"/><rect x="239" y="219.6" width="66" height="0.8" fill="#7a6448"/><rect x="241.5" y="216.6" width="2" height="2" fill="#c8c0b0"/><rect x="300.5" y="216.6" width="2" height="2" fill="#c8c0b0"/><rect x="239" y="227.2" width="66" height="0.8" fill="#7a6448"/><rect x="241.5" y="224.2" width="2" height="2" fill="#c8c0b0"/><rect x="300.5" y="224.2" width="2" height="2" fill="#c8c0b0"/><rect x="239" y="234.8" width="66" height="0.8" fill="#7a6448"/><rect x="241.5" y="231.8" width="2" height="2" fill="#c8c0b0"/><rect x="300.5" y="231.8" width="2" height="2" fill="#c8c0b0"/><rect x="239" y="242.4" width="66" height="0.8" fill="#7a6448"/><rect x="241.5" y="239.4" width="2" height="2" fill="#c8c0b0"/><rect x="300.5" y="239.4" width="2" height="2" fill="#c8c0b0"/><rect x="239" y="250.0" width="66" height="0.8" fill="#7a6448"/><rect x="238" y="129" width="1" height="124" fill="#2a1e12"/><rect x="305" y="129" width="1" height="124" fill="#2a1e12"/><rect x="226" y="206" width="8" height="7" rx="2" fill="#a8a098"/><rect x="310" y="206" width="8" height="7" rx="2" fill="#a8a098"/><g fill="#3a2410" opacity=".75"><rect x="31.5" y="0" width="1" height="512"/><rect x="0" y="31.5" width="512" height="1"/><rect x="63.5" y="0" width="1" height="512"/><rect x="0" y="63.5" width="512" height="1"/><rect x="95.5" y="0" width="1" height="512"/><rect x="0" y="95.5" width="512" height="1"/><rect x="127.5" y="0" width="1" height="512"/><rect x="0" y="127.5" width="512" height="1"/><rect x="159.5" y="0" width="1" height="512"/><rect x="0" y="159.5" width="512" height="1"/><rect x="191.5" y="0" width="1" height="512"/><rect x="0" y="191.5" width="512" height="1"/><rect x="223.5" y="0" width="1" height="512"/><rect x="0" y="223.5" width="512" height="1"/><rect x="255.5" y="0" width="1" height="512"/><rect x="0" y="255.5" width="512" height="1"/><rect x="287.5" y="0" width="1" height="512"/><rect x="0" y="287.5" width="512" height="1"/><rect x="319.5" y="0" width="1" height="512"/><rect x="0" y="319.5" width="512" height="1"/><rect x="351.5" y="0" width="1" height="512"/><rect x="0" y="351.5" width="512" height="1"/><rect x="383.5" y="0" width="1" height="512"/><rect x="0" y="383.5" width="512" height="1"/><rect x="415.5" y="0" width="1" height="512"/><rect x="0" y="415.5" width="512" height="1"/><rect x="447.5" y="0" width="1" height="512"/><rect x="0" y="447.5" width="512" height="1"/><rect x="479.5" y="0" width="1" height="512"/><rect x="0" y="479.5" width="512" height="1"/><rect x="0" y="0" width="512" height="1"/><rect x="0" y="0" width="1" height="512"/></g><rect x="162" y="228" width="17" height="7.5" rx="3.5" fill="#4f3f2e" stroke="#2a2016" stroke-width="1"/><rect x="175" y="226" width="14" height="7" rx="3.5" fill="#4f3f2e" stroke="#2a2016" stroke-width="1"/><rect x="174" y="233.5" width="17" height="8" rx="3.5" fill="#4f3f2e" stroke="#2a2016" stroke-width="1"/><rect x="165" y="243" width="22" height="8.5" rx="3.5" fill="#4f3f2e" stroke="#2a2016" stroke-width="1"/><rect x="162" y="260" width="17" height="7.5" rx="3.5" fill="#4f3f2e" stroke="#2a2016" stroke-width="1"/><rect x="175" y="258" width="14" height="7" rx="3.5" fill="#4f3f2e" stroke="#2a2016" stroke-width="1"/><rect x="174" y="265.5" width="17" height="8" rx="3.5" fill="#4f3f2e" stroke="#2a2016" stroke-width="1"/><rect x="165" y="275" width="22" height="8.5" rx="3.5" fill="#4f3f2e" stroke="#2a2016" stroke-width="1"/><rect x="162" y="292" width="17" height="7.5" rx="3.5" fill="#4f3f2e" stroke="#2a2016" stroke-width="1"/><rect x="175" y="290" width="14" height="7" rx="3.5" fill="#4f3f2e" stroke="#2a2016" stroke-width="1"/><rect x="174" y="297.5" width="17" height="8" rx="3.5" fill="#4f3f2e" stroke="#2a2016" stroke-width="1"/><rect x="165" y="307" width="22" height="8.5" rx="3.5" fill="#4f3f2e" stroke="#2a2016" stroke-width="1"/><rect x="162" y="324" width="17" height="7.5" rx="3.5" fill="#4f3f2e" stroke="#2a2016" stroke-width="1"/><rect x="175" y="322" width="14" height="7" rx="3.5" fill="#4f3f2e" stroke="#2a2016" stroke-width="1"/><rect x="174" y="329.5" width="17" height="8" rx="3.5" fill="#4f3f2e" stroke="#2a2016" stroke-width="1"/><rect x="165" y="339" width="22" height="8.5" rx="3.5" fill="#4f3f2e" stroke="#2a2016" stroke-width="1"/><rect x="162" y="356" width="17" height="7.5" rx="3.5" fill="#4f3f2e" stroke="#2a2016" stroke-width="1"/><rect x="175" y="354" width="14" height="7" rx="3.5" fill="#4f3f2e" stroke="#2a2016" stroke-width="1"/><rect x="174" y="361.5" width="17" height="8" rx="3.5" fill="#4f3f2e" stroke="#2a2016" stroke-width="1"/><rect x="165" y="371" width="22" height="8.5" rx="3.5" fill="#4f3f2e" stroke="#2a2016" stroke-width="1"/><rect x="162" y="388" width="17" height="7.5" rx="3.5" fill="#4f3f2e" stroke="#2a2016" stroke-width="1"/><rect x="175" y="386" width="14" height="7" rx="3.5" fill="#4f3f2e" stroke="#2a2016" stroke-width="1"/><rect x="174" y="393.5" width="17" height="8" rx="3.5" fill="#4f3f2e" stroke="#2a2016" stroke-width="1"/><rect x="165" y="403" width="22" height="8.5" rx="3.5" fill="#4f3f2e" stroke="#2a2016" stroke-width="1"/><rect x="162" y="420" width="17" height="7.5" rx="3.5" fill="#4f3f2e" stroke="#2a2016" stroke-width="1"/><rect x="175" y="418" width="14" height="7" rx="3.5" fill="#4f3f2e" stroke="#2a2016" stroke-width="1"/><rect x="174" y="425.5" width="17" height="8" rx="3.5" fill="#4f3f2e" stroke="#2a2016" stroke-width="1"/><rect x="165" y="435" width="22" height="8.5" rx="3.5" fill="#4f3f2e" stroke="#2a2016" stroke-width="1"/><rect x="354" y="228" width="17" height="7.5" rx="3.5" fill="#4f3f2e" stroke="#2a2016" stroke-width="1"/><rect x="367" y="226" width="14" height="7" rx="3.5" fill="#4f3f2e" stroke="#2a2016" stroke-width="1"/><rect x="366" y="233.5" width="17" height="8" rx="3.5" fill="#4f3f2e" stroke="#2a2016" stroke-width="1"/><rect x="357" y="243" width="22" height="8.5" rx="3.5" fill="#4f3f2e" stroke="#2a2016" stroke-width="1"/><rect x="354" y="260" width="17" height="7.5" rx="3.5" fill="#4f3f2e" stroke="#2a2016" stroke-width="1"/><rect x="367" y="258" width="14" height="7" rx="3.5" fill="#4f3f2e" stroke="#2a2016" stroke-width="1"/><rect x="366" y="265.5" width="17" height="8" rx="3.5" fill="#4f3f2e" stroke="#2a2016" stroke-width="1"/><rect x="357" y="275" width="22" height="8.5" rx="3.5" fill="#4f3f2e" stroke="#2a2016" stroke-width="1"/><rect x="354" y="292" width="17" height="7.5" rx="3.5" fill="#4f3f2e" stroke="#2a2016" stroke-width="1"/><rect x="367" y="290" width="14" height="7" rx="3.5" fill="#4f3f2e" stroke="#2a2016" stroke-width="1"/><rect x="366" y="297.5" width="17" height="8" rx="3.5" fill="#4f3f2e" stroke="#2a2016" stroke-width="1"/><rect x="357" y="307" width="22" height="8.5" rx="3.5" fill="#4f3f2e" stroke="#2a2016" stroke-width="1"/><rect x="354" y="324" width="17" height="7.5" rx="3.5" fill="#4f3f2e" stroke="#2a2016" stroke-width="1"/><rect x="367" y="322" width="14" height="7" rx="3.5" fill="#4f3f2e" stroke="#2a2016" stroke-width="1"/><rect x="366" y="329.5" width="17" height="8" rx="3.5" fill="#4f3f2e" stroke="#2a2016" stroke-width="1"/><rect x="357" y="339" width="22" height="8.5" rx="3.5" fill="#4f3f2e" stroke="#2a2016" stroke-width="1"/><rect x="354" y="356" width="17" height="7.5" rx="3.5" fill="#4f3f2e" stroke="#2a2016" stroke-width="1"/><rect x="367" y="354" width="14" height="7" rx="3.5" fill="#4f3f2e" stroke="#2a2016" stroke-width="1"/><rect x="366" y="361.5" width="17" height="8" rx="3.5" fill="#4f3f2e" stroke="#2a2016" stroke-width="1"/><rect x="357" y="371" width="22" height="8.5" rx="3.5" fill="#4f3f2e" stroke="#2a2016" stroke-width="1"/><rect x="354" y="388" width="17" height="7.5" rx="3.5" fill="#4f3f2e" stroke="#2a2016" stroke-width="1"/><rect x="367" y="386" width="14" height="7" rx="3.5" fill="#4f3f2e" stroke="#2a2016" stroke-width="1"/><rect x="366" y="393.5" width="17" height="8" rx="3.5" fill="#4f3f2e" stroke="#2a2016" stroke-width="1"/><rect x="357" y="403" width="22" height="8.5" rx="3.5" fill="#4f3f2e" stroke="#2a2016" stroke-width="1"/><rect x="354" y="420" width="17" height="7.5" rx="3.5" fill="#4f3f2e" stroke="#2a2016" stroke-width="1"/><rect x="367" y="418" width="14" height="7" rx="3.5" fill="#4f3f2e" stroke="#2a2016" stroke-width="1"/><rect x="366" y="425.5" width="17" height="8" rx="3.5" fill="#4f3f2e" stroke="#2a2016" stroke-width="1"/><rect x="357" y="435" width="22" height="8.5" rx="3.5" fill="#4f3f2e" stroke="#2a2016" stroke-width="1"/><rect x="226" y="260" width="17" height="7.5" rx="3.5" fill="#4f3f2e" stroke="#2a2016" stroke-width="1"/><rect x="239" y="258" width="14" height="7" rx="3.5" fill="#4f3f2e" stroke="#2a2016" stroke-width="1"/><rect x="238" y="265.5" width="17" height="8" rx="3.5" fill="#4f3f2e" stroke="#2a2016" stroke-width="1"/><rect x="229" y="275" width="22" height="8.5" rx="3.5" fill="#4f3f2e" stroke="#2a2016" stroke-width="1"/><rect x="226" y="292" width="17" height="7.5" rx="3.5" fill="#4f3f2e" stroke="#2a2016" stroke-width="1"/><rect x="239" y="290" width="14" height="7" rx="3.5" fill="#4f3f2e" stroke="#2a2016" stroke-width="1"/><rect x="238" y="297.5" width="17" height="8" rx="3.5" fill="#4f3f2e" stroke="#2a2016" stroke-width="1"/><rect x="229" y="307" width="22" height="8.5" rx="3.5" fill="#4f3f2e" stroke="#2a2016" stroke-width="1"/><rect x="226" y="324" width="17" height="7.5" rx="3.5" fill="#4f3f2e" stroke="#2a2016" stroke-width="1"/><rect x="239" y="322" width="14" height="7" rx="3.5" fill="#4f3f2e" stroke="#2a2016" stroke-width="1"/><rect x="238" y="329.5" width="17" height="8" rx="3.5" fill="#4f3f2e" stroke="#2a2016" stroke-width="1"/><rect x="229" y="339" width="22" height="8.5" rx="3.5" fill="#4f3f2e" stroke="#2a2016" stroke-width="1"/><rect x="226" y="356" width="17" height="7.5" rx="3.5" fill="#4f3f2e" stroke="#2a2016" stroke-width="1"/><rect x="239" y="354" width="14" height="7" rx="3.5" fill="#4f3f2e" stroke="#2a2016" stroke-width="1"/><rect x="238" y="361.5" width="17" height="8" rx="3.5" fill="#4f3f2e" stroke="#2a2016" stroke-width="1"/><rect x="229" y="371" width="22" height="8.5" rx="3.5" fill="#4f3f2e" stroke="#2a2016" stroke-width="1"/><rect x="226" y="388" width="17" height="7.5" rx="3.5" fill="#4f3f2e" stroke="#2a2016" stroke-width="1"/><rect x="239" y="386" width="14" height="7" rx="3.5" fill="#4f3f2e" stroke="#2a2016" stroke-width="1"/><rect x="238" y="393.5" width="17" height="8" rx="3.5" fill="#4f3f2e" stroke="#2a2016" stroke-width="1"/><rect x="229" y="403" width="22" height="8.5" rx="3.5" fill="#4f3f2e" stroke="#2a2016" stroke-width="1"/><rect x="226" y="420" width="17" height="7.5" rx="3.5" fill="#4f3f2e" stroke="#2a2016" stroke-width="1"/><rect x="239" y="418" width="14" height="7" rx="3.5" fill="#4f3f2e" stroke="#2a2016" stroke-width="1"/><rect x="238" y="425.5" width="17" height="8" rx="3.5" fill="#4f3f2e" stroke="#2a2016" stroke-width="1"/><rect x="229" y="435" width="22" height="8.5" rx="3.5" fill="#4f3f2e" stroke="#2a2016" stroke-width="1"/><rect x="290" y="260" width="17" height="7.5" rx="3.5" fill="#4f3f2e" stroke="#2a2016" stroke-width="1"/><rect x="303" y="258" width="14" height="7" rx="3.5" fill="#4f3f2e" stroke="#2a2016" stroke-width="1"/><rect x="302" y="265.5" width="17" height="8" rx="3.5" fill="#4f3f2e" stroke="#2a2016" stroke-width="1"/><rect x="293" y="275" width="22" height="8.5" rx="3.5" fill="#4f3f2e" stroke="#2a2016" stroke-width="1"/><rect x="290" y="292" width="17" height="7.5" rx="3.5" fill="#4f3f2e" stroke="#2a2016" stroke-width="1"/><rect x="303" y="290" width="14" height="7" rx="3.5" fill="#4f3f2e" stroke="#2a2016" stroke-width="1"/><rect x="302" y="297.5" width="17" height="8" rx="3.5" fill="#4f3f2e" stroke="#2a2016" stroke-width="1"/><rect x="293" y="307" width="22" height="8.5" rx="3.5" fill="#4f3f2e" stroke="#2a2016" stroke-width="1"/><rect x="290" y="324" width="17" height="7.5" rx="3.5" fill="#4f3f2e" stroke="#2a2016" stroke-width="1"/><rect x="303" y="322" width="14" height="7" rx="3.5" fill="#4f3f2e" stroke="#2a2016" stroke-width="1"/><rect x="302" y="329.5" width="17" height="8" rx="3.5" fill="#4f3f2e" stroke="#2a2016" stroke-width="1"/><rect x="293" y="339" width="22" height="8.5" rx="3.5" fill="#4f3f2e" stroke="#2a2016" stroke-width="1"/><rect x="290" y="356" width="17" height="7.5" rx="3.5" fill="#4f3f2e" stroke="#2a2016" stroke-width="1"/><rect x="303" y="354" width="14" height="7" rx="3.5" fill="#4f3f2e" stroke="#2a2016" stroke-width="1"/><rect x="302" y="361.5" width="17" height="8" rx="3.5" fill="#4f3f2e" stroke="#2a2016" stroke-width="1"/><rect x="293" y="371" width="22" height="8.5" rx="3.5" fill="#4f3f2e" stroke="#2a2016" stroke-width="1"/><rect x="290" y="388" width="17" height="7.5" rx="3.5" fill="#4f3f2e" stroke="#2a2016" stroke-width="1"/><rect x="303" y="386" width="14" height="7" rx="3.5" fill="#4f3f2e" stroke="#2a2016" stroke-width="1"/><rect x="302" y="393.5" width="17" height="8" rx="3.5" fill="#4f3f2e" stroke="#2a2016" stroke-width="1"/><rect x="293" y="403" width="22" height="8.5" rx="3.5" fill="#4f3f2e" stroke="#2a2016" stroke-width="1"/><rect x="290" y="420" width="17" height="7.5" rx="3.5" fill="#4f3f2e" stroke="#2a2016" stroke-width="1"/><rect x="303" y="418" width="14" height="7" rx="3.5" fill="#4f3f2e" stroke="#2a2016" stroke-width="1"/><rect x="302" y="425.5" width="17" height="8" rx="3.5" fill="#4f3f2e" stroke="#2a2016" stroke-width="1"/><rect x="293" y="435" width="22" height="8.5" rx="3.5" fill="#4f3f2e" stroke="#2a2016" stroke-width="1"/><rect x="161.5" y="65.5" width="29" height="29" fill="none" stroke="#f2f2f2" stroke-width="1.2"/><rect x="225.5" y="65.5" width="29" height="29" fill="none" stroke="#f2f2f2" stroke-width="1.2"/><rect x="289.5" y="65.5" width="29" height="29" fill="none" stroke="#f2f2f2" stroke-width="1.2"/><rect x="353.5" y="65.5" width="29" height="29" fill="none" stroke="#f2f2f2" stroke-width="1.2"/><circle cx="176" cy="73" r="6" fill="#9a9ca4"/><rect x="169" y="78" width="14" height="10" rx="3" fill="#b8bac0"/><rect x="172" y="87" width="8" height="6" fill="#8a8c94"/><rect x="172" y="72" width="8" height="2" fill="#333"/><ellipse cx="240" cy="75" rx="7" ry="9" fill="#7a3f20"/><ellipse cx="240" cy="75" rx="4" ry="5" fill="#f2d2b0"/><rect x="236" y="82" width="8" height="8" fill="#3a3a40"/><rect x="237" y="90" width="6" height="3" fill="#e8c8a8"/><circle cx="304" cy="74" r="7" fill="#2e2e30"/><ellipse cx="304" cy="76" rx="4.5" ry="4" fill="#f0d0a8"/><rect x="300" y="75" width="8" height="2.5" fill="#b8c8e0"/><path d="M297 81 H311 Q313 88 311 93 H297 Q295 88 297 81Z" fill="#1d3f88"/><rect x="303" y="82" width="2" height="10" fill="#c8c0b0"/><ellipse cx="368" cy="74" rx="6.5" ry="7" fill="#8a4a28"/><ellipse cx="368" cy="76" rx="4" ry="4" fill="#f2d2b0"/><path d="M362 81 H374 L376 92 H360Z" fill="#c89830"/><rect x="257.5" y="449.5" width="29" height="29" fill="none" stroke="#f2f2f2" stroke-width="1.2"/><path d="M272 456 Q277 460 278 466 Q281 472 279 477 H265 Q263 472 266 466 Q267 460 272 456Z" fill="#40c8f0"/><path d="M269 464 L275 470 M268 472 L276 465" stroke="#c8f6ff" stroke-width="1.3"/><ellipse cx="272" cy="455" rx="3" ry="1.5" fill="#506070"/></svg><!--/MAP-->

<!-- tree -->
<div id="tree" class="a"><div class="a" style="left:7px;top:7.00px;width:13px;height:11px;background:#f7c936;border-radius:1px"></div><div class="a" style="left:7px;top:6.00px;width:5px;height:2px;background:#f0a830"></div><div class="ti" style="left:26px;top:0.00px">네코샘플</div><div class="doc" style="left:25px;top:29.17px"></div><div class="mn" style="left:9px;top:32.17px"></div><div class="ti" style="left:43px;top:24.17px">맨처음 접속 인트로->스토리</div><div class="a" style="left:1px;top:47.84px;width:290px;height:24px;background:#ececec"></div><div class="doc" style="left:42px;top:53.34px"></div><div class="ti" style="left:60px;top:48.34px">캐릭터 선택창</div><div class="doc" style="left:25px;top:77.51px"></div><div class="mn" style="left:9px;top:80.51px"></div><div class="ti" style="left:43px;top:72.51px">사냥터</div><div class="doc" style="left:42px;top:101.68px"></div><div class="ti" style="left:60px;top:96.68px">보스맵</div><div class="doc" style="left:25px;top:125.85px"></div><div class="mn" style="left:9px;top:128.85px"></div><div class="ti" style="left:43px;top:120.85px">마을</div><div class="doc" style="left:42px;top:150.02px"></div><div class="mn" style="left:26px;top:153.02px"></div><div class="ti" style="left:60px;top:145.02px">이동소</div><div class="doc" style="left:59px;top:174.19px"></div><div class="mn" style="left:43px;top:177.19px"></div><div class="ti" style="left:77px;top:169.19px">배경효과</div><div class="doc" style="left:76px;top:198.36px"></div><div class="ti" style="left:94px;top:193.36px">포그방</div><div class="doc" style="left:76px;top:222.53px"></div><div class="ti" style="left:94px;top:217.53px">파노라마방</div><div class="doc" style="left:76px;top:246.70px"></div><div class="ti" style="left:94px;top:241.70px">날씨</div><div class="doc" style="left:76px;top:270.87px"></div><div class="ti" style="left:94px;top:265.87px">주변광</div><div class="doc" style="left:76px;top:295.04px"></div><div class="ti" style="left:94px;top:290.04px">타일배경방</div></div>

<!-- hscroll -->
<div class="a" style="left:293px;top:1004px;width:1617px;height:21px;background:#f0f0f0"></div>
<div class="a" style="left:313px;top:1005px;width:940px;height:18px;background:#cdcdcd"></div>
<svg class="a" style="left:300px;top:1010px" width="7" height="10"><path d="M6 1 L2 5 L6 9" stroke="#505050" stroke-width="1.6" fill="none"/></svg>

<!-- vscroll -->
<div class="a" style="left:1910px;top:83px;width:10px;height:921px;background:#f0f0f0"></div>
<div class="a" style="left:1909px;top:83px;width:1px;height:921px;background:#fafafa"></div><div class="a" style="left:1911px;top:100px;width:9px;height:524px;background:#cdcdcd"></div><svg class="a" style="left:1914px;top:89px" width="6" height="6"><path d="M0.5 5 L5 1" stroke="#505050" stroke-width="1.5"/></svg><svg class="a" style="left:1914px;top:992px" width="6" height="6"><path d="M0.5 1 L5 5" stroke="#505050" stroke-width="1.5"/></svg>

<!-- status -->
<div id="status" class="a"><div class="a" style="left:293px;top:-1px;width:1627px;height:1px;background:#dadada"></div>
  <div class="a" style="left:206px;top:4px;font-size:12px;white-space:nowrap">캐릭터 선택창 (16x16)</div>
  <div class="a" style="left:708px;top:4px;font-size:12px">100%</div>
</div>

<!-- dialog -->
<div id="dlg" class="a">
  <div class="a" style="left:0;top:0;width:993px;height:30px;background:#fff"></div>
  <div class="a" style="left:9px;top:7px;font-size:12.5px;white-space:nowrap">리소스 관리자</div>
  <svg class="a" style="left:973px;top:9px" width="11" height="11"><path d="M0.5 0.5L10.5 10.5M10.5 0.5L0.5 10.5" stroke="#111" stroke-width="1.1"/></svg>
  <div class="btn" style="left:408px;top:40px;width:110px">리소스 마켓</div>
  <div class="btn" style="left:526px;top:40px;width:110px">가져오기</div>
  <div class="btn" style="left:643px;top:40px;width:110px">설정</div>
  <div class="btn" style="left:760px;top:40px;width:110px">삭제</div>
  <div class="btn" style="left:877px;top:40px;width:109px">기타 옵션</div>
  <div class="a" style="left:10px;top:71px;width:977px;height:490px;background:#fcfcfc;border:1px solid #dcdcdc"></div>
  <div class="box" style="left:18px;top:81px;width:190px;height:470px"><div class="a" style="left:0;top:0;width:188px;height:468px;overflow:hidden"><div class="tr" style="top:0.00px">Tilesets</div><div class="a" style="left:14px;top:7.50px;width:9px;height:1px;border-top:1px dotted #a0a0a0"></div><div class="tr" style="top:14.13px">Animations</div><div class="a" style="left:14px;top:21.63px;width:9px;height:1px;border-top:1px dotted #a0a0a0"></div><div class="tr" style="top:28.26px">Pictures</div><div class="a" style="left:14px;top:35.76px;width:9px;height:1px;border-top:1px dotted #a0a0a0"></div><div class="a" style="left:23px;top:43.19px;width:66px;height:13.4px;background:#0078d7"></div><div class="tr" style="top:42.39px;color:#fff">Characters</div><div class="a" style="left:14px;top:49.89px;width:9px;height:1px;border-top:1px dotted #a0a0a0"></div><div class="tr" style="top:56.52px">Spines</div><div class="a" style="left:14px;top:64.02px;width:9px;height:1px;border-top:1px dotted #a0a0a0"></div><div class="tr" style="top:70.65px">Icons</div><div class="a" style="left:14px;top:78.15px;width:9px;height:1px;border-top:1px dotted #a0a0a0"></div><div class="tr" style="top:84.78px">Windowskins</div><div class="a" style="left:14px;top:92.28px;width:9px;height:1px;border-top:1px dotted #a0a0a0"></div><div class="tr" style="top:98.91px">BGM</div><div class="a" style="left:14px;top:106.41px;width:9px;height:1px;border-top:1px dotted #a0a0a0"></div><div class="tr" style="top:113.04px">BGS</div><div class="a" style="left:14px;top:120.54px;width:9px;height:1px;border-top:1px dotted #a0a0a0"></div><div class="tr" style="top:127.17px">SE</div><div class="a" style="left:14px;top:134.67px;width:9px;height:1px;border-top:1px dotted #a0a0a0"></div><div class="tr" style="top:141.30px">ME</div><div class="a" style="left:14px;top:148.80px;width:9px;height:1px;border-top:1px dotted #a0a0a0"></div><div class="a" style="left:13px;top:8px;width:1px;height:141.80px;border-left:1px dotted #a0a0a0"></div></div></div>
  <div class="box" style="left:216px;top:81px;width:177px;height:463px"><div class="a" style="left:0;top:0;width:175px;height:461px;overflow:hidden"><div class="li" style="top:0px">(None)</div><div class="li" style="top:12px">arhor.png</div><div class="li" style="top:24px">boss1.png</div><div class="li" style="top:36px">Character_1.png</div><div class="a" style="left:1px;top:48px;width:173px;height:12px;background:#0078d7"></div><div class="li" style="top:48px;color:#fff">magician.png</div><div class="li" style="top:60px">modernguy05.png</div><div class="li" style="top:72px">portal.png</div><div class="li" style="top:84px">thief.png</div><div class="li" style="top:96px">warrior.png</div><div class="li" style="top:108px">zombi1.png</div><div class="li" style="top:120px">zombi2.png</div></div></div>
  <div class="a" style="left:404px;top:78px;font-size:12.5px;white-space:nowrap">미리보기</div>
  <div class="box" style="left:399px;top:100px;width:578px;height:451px"><svg class="a" style="left:0;top:0" width="576" height="449" id="spr"><defs>
<g id="hf"><path d="M8 22 Q5 8 12 3 Q19 -1 26 3 Q33 8 30 22 Z" fill="#383838"/><path d="M11.5 12 Q19 7 26.5 12 L26 19 Q19 23.5 12 19Z" fill="#f1cfa4"/><rect x="11" y="12" width="7" height="5" rx="2.5" fill="#c5d2e6" stroke="#8a96a8" stroke-width=".8"/><rect x="20" y="12" width="7" height="5" rx="2.5" fill="#c5d2e6" stroke="#8a96a8" stroke-width=".8"/></g>
<g id="bf"><path d="M9 21 H29 Q36 26 36 36 Q36 46 30 47 H8 Q2 46 3 36 Q3 26 9 21Z" fill="#1d3f88"/><path d="M17 21 L16 46 M21 21 L22 46" stroke="#b99a68" stroke-width="1.3"/><path d="M17 34 L18 46 M21 34 L20 46" stroke="#e8e8e8" stroke-width="1.6"/><circle cx="5" cy="36" r="2.5" fill="#d2a66a"/><circle cx="33" cy="36" r="2.5" fill="#d2a66a"/><rect x="12" y="46" width="14" height="2" fill="#333"/></g>
<g id="front"><use href="#bf"/><use href="#hf"/></g>
<g id="left"><path d="M11 21 H27 Q31 30 30 44 L26 47 H12 Q9 40 10 30Z" fill="#1d3f88"/><path d="M13 22 L12 46" stroke="#b99a68" stroke-width="1.3"/><rect x="13" y="45" width="13" height="3" fill="#333"/><ellipse cx="19" cy="11" rx="11" ry="10.5" fill="#383838"/><path d="M8 10 Q13 7 20 12 L21 19 Q15 23 9 19Z" fill="#f1cfa4"/><rect x="7" y="13" width="10" height="4" rx="2" fill="#c5d2e6" stroke="#8a96a8" stroke-width=".8"/></g>
<g id="right"><use href="#left" transform="translate(39 0) scale(-1 1)"/></g>
<g id="back"><path d="M9 21 H29 Q36 26 36 36 Q36 46 30 47 H8 Q2 46 3 36 Q3 26 9 21Z" fill="#1d3f88"/><rect x="12" y="46" width="14" height="2" fill="#333"/><ellipse cx="19" cy="11.5" rx="12" ry="11.5" fill="#3c3c3c"/></g>
</defs><use href="#front" x="0" y="0"/><use href="#front" x="40" y="0"/><use href="#front" x="80" y="0"/><use href="#front" x="120" y="0"/><use href="#left" x="0" y="48"/><use href="#left" x="40" y="48"/><use href="#left" x="80" y="48"/><use href="#left" x="120" y="48"/><use href="#right" x="0" y="96"/><use href="#right" x="40" y="96"/><use href="#right" x="80" y="96"/><use href="#right" x="120" y="96"/><use href="#back" x="0" y="144"/><use href="#back" x="40" y="144"/><use href="#back" x="80" y="144"/><use href="#back" x="120" y="144"/><use href="#front" x="0" y="192"/><path d="M1 200 L8 238" stroke="#a87224" stroke-width="2.6"/><circle cx="1.5" cy="200" r="2.2" fill="#3aa6f0"/><use href="#front" x="40" y="192"/><path d="M41 200 L48 238" stroke="#a87224" stroke-width="2.6"/><circle cx="41.5" cy="200" r="2.2" fill="#3aa6f0"/><use href="#front" x="80" y="192"/><path d="M81 200 L88 238" stroke="#a87224" stroke-width="2.6"/><circle cx="81.5" cy="200" r="2.2" fill="#3aa6f0"/><use href="#front" x="120" y="192"/><path d="M121 200 L128 238" stroke="#a87224" stroke-width="2.6"/><circle cx="121.5" cy="200" r="2.2" fill="#3aa6f0"/><use href="#left" x="0" y="240"/><path d="M0 258 L28 284" stroke="#a87224" stroke-width="2.6"/><circle cx="1" cy="258" r="2.2" fill="#3aa6f0"/><use href="#left" x="40" y="240"/><path d="M40 258 L68 284" stroke="#a87224" stroke-width="2.6"/><circle cx="41" cy="258" r="2.2" fill="#3aa6f0"/><use href="#left" x="80" y="240"/><path d="M80 258 L108 284" stroke="#a87224" stroke-width="2.6"/><circle cx="81" cy="258" r="2.2" fill="#3aa6f0"/><use href="#left" x="120" y="240"/><path d="M120 258 L148 284" stroke="#a87224" stroke-width="2.6"/><circle cx="121" cy="258" r="2.2" fill="#3aa6f0"/><use href="#right" x="0" y="288"/><path d="M37 306 L8 332" stroke="#a87224" stroke-width="2.6"/><circle cx="37" cy="306" r="2.2" fill="#3aa6f0"/><use href="#right" x="40" y="288"/><path d="M77 306 L48 332" stroke="#a87224" stroke-width="2.6"/><circle cx="77" cy="306" r="2.2" fill="#3aa6f0"/><use href="#right" x="80" y="288"/><path d="M117 306 L88 332" stroke="#a87224" stroke-width="2.6"/><circle cx="117" cy="306" r="2.2" fill="#3aa6f0"/><use href="#right" x="120" y="288"/><path d="M157 306 L128 332" stroke="#a87224" stroke-width="2.6"/><circle cx="157" cy="306" r="2.2" fill="#3aa6f0"/><use href="#back" x="0" y="336"/><path d="M33 351 L28 384" stroke="#a87224" stroke-width="2.6"/><circle cx="33" cy="351" r="2.2" fill="#3aa6f0"/><use href="#back" x="40" y="336"/><path d="M73 351 L68 384" stroke="#a87224" stroke-width="2.6"/><circle cx="73" cy="351" r="2.2" fill="#3aa6f0"/><use href="#back" x="80" y="336"/><path d="M113 351 L108 384" stroke="#a87224" stroke-width="2.6"/><circle cx="113" cy="351" r="2.2" fill="#3aa6f0"/><use href="#back" x="120" y="336"/><path d="M153 351 L148 384" stroke="#a87224" stroke-width="2.6"/><circle cx="153" cy="351" r="2.2" fill="#3aa6f0"/></svg></div>
  <div class="btn" style="left:876px;top:565px;width:109px">취소</div><svg class="a" style="left:981px;top:584px" width="10" height="10"><g fill="#c8c8c8"><rect x="7" y="1" width="1.5" height="1.5"/><rect x="4" y="4" width="1.5" height="1.5"/><rect x="7" y="4" width="1.5" height="1.5"/><rect x="1" y="7" width="1.5" height="1.5"/><rect x="4" y="7" width="1.5" height="1.5"/><rect x="7" y="7" width="1.5" height="1.5"/></g></svg>
</div>

</body></html>
